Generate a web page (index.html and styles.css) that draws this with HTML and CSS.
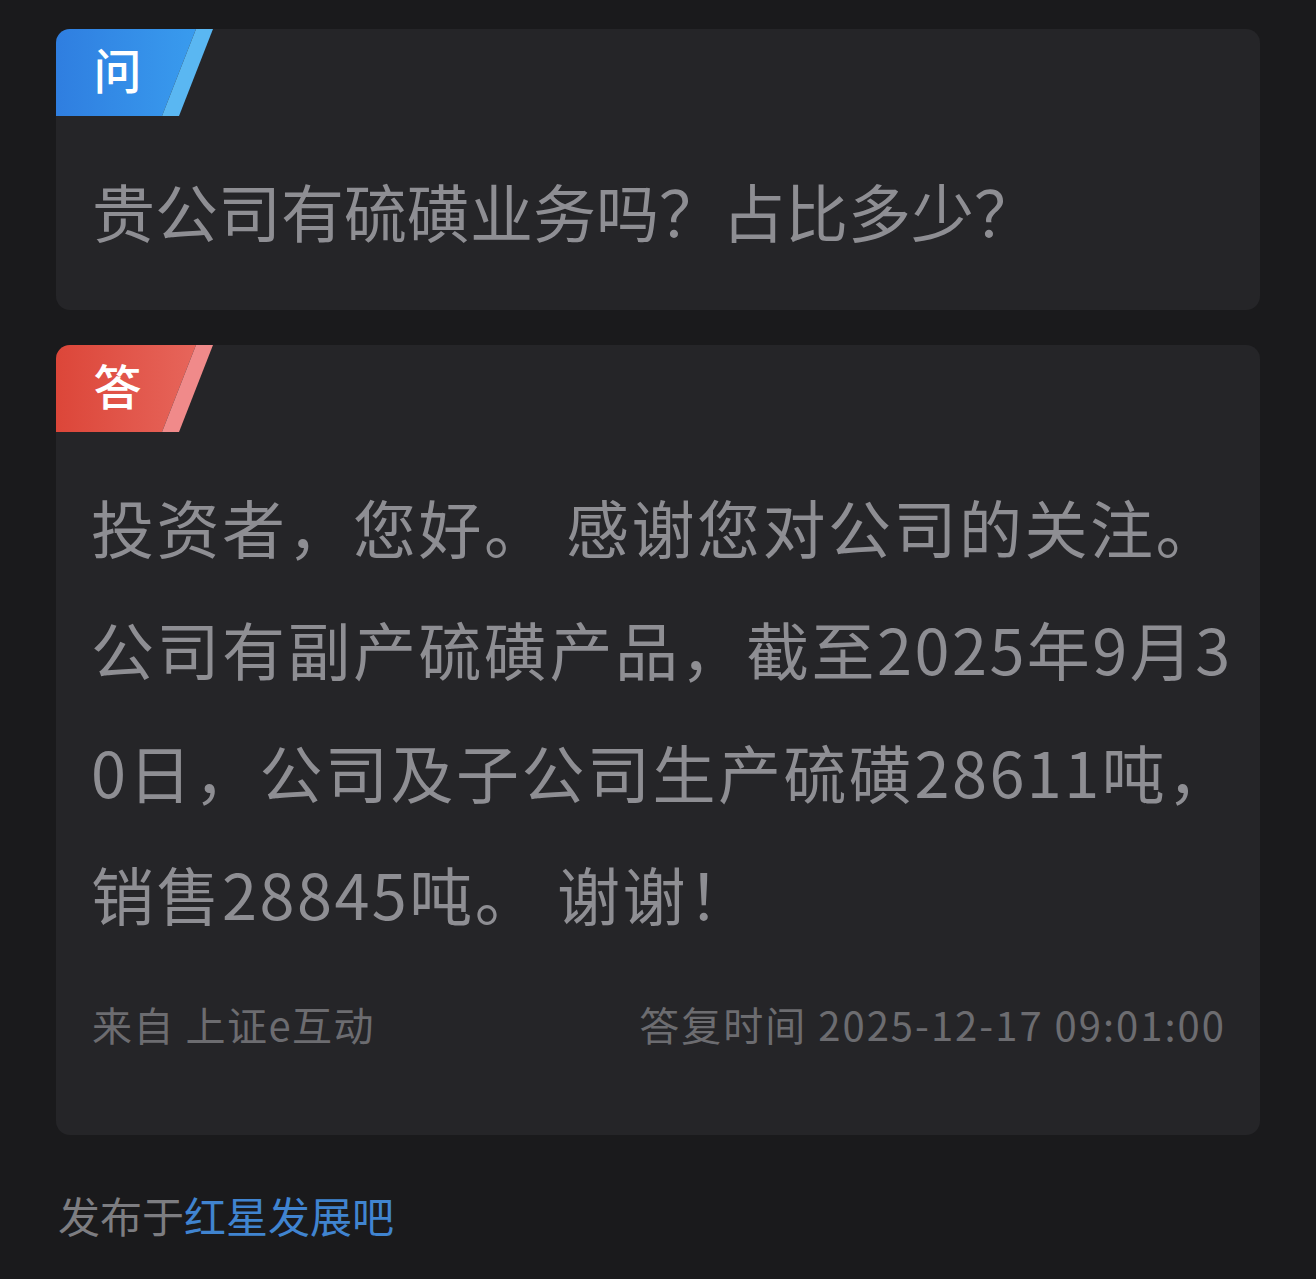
FILE: index.html
```html
<!DOCTYPE html>
<html lang="zh-CN">
<head>
<meta charset="utf-8">
<title>问答</title>
<link rel="stylesheet" href="styles.css">
</head>
<body>
<main class="page">
  <section class="card">
    <div class="badge badge-q"><span class="badge-text">问</span></div>
    <p class="question">贵公司有硫磺业务吗？占比多少？</p>
  </section>
  <section class="card">
    <div class="badge badge-a"><span class="badge-text">答</span></div>
    <p class="answer">投资者，您好。 感谢您对公司的关注。<br>公司有副产硫磺产品，截至2025年9月3<br>0日，公司及子公司生产硫磺28611吨，<br>销售28845吨。 谢谢！</p>
    <div class="meta">
      <span class="source">来自 上证e互动</span>
      <span class="time">答复时间 2025-12-17 09:01:00</span>
    </div>
  </section>
  <p class="posted">发布于<a class="forum" href="#">红星发展吧</a></p>
</main>
</body>
</html>
```

FILE: styles.css
```css
* { box-sizing: border-box; }
html, body {
  margin: 0;
  padding: 0;
  background: #1a1a1c;
}
body {
  font-family: "Noto Sans CJK SC", "Noto Sans", sans-serif;
  color: #8e8e93;
}
.page {
  padding: 29px 56px 0;
  display: flex;
  flex-direction: column;
  gap: 35px;
}
.card {
  background: #252528;
  border-radius: 14px;
  overflow: hidden;
}
.badge {
  position: relative;
  width: 157px;
  height: 87px;
  display: flex;
  align-items: center;
}
.badge::before,
.badge::after {
  content: "";
  position: absolute;
  inset: 0;
}
.badge::before {
  clip-path: polygon(0 0, 140px 0, 106px 100%, 0 100%);
}
.badge::after {
  clip-path: polygon(140px 0, 157px 0, 123px 100%, 106px 100%);
}
.badge-q::before { background: linear-gradient(90deg, #2f7ee0, #3a9ff0); }
.badge-q::after { background: #5ab7f2; }
.badge-a::before { background: linear-gradient(90deg, #dc4639, #e8695f); }
.badge-a::after { background: #f08a8a; }
.badge-text {
  position: relative;
  z-index: 1;
  width: 123px;
  text-align: center;
  color: #ffffff;
  font-size: 48px;
  font-weight: 500;
  line-height: 1;
  margin-top: -10px;
}
.question {
  margin: 0;
  padding: 47px 36px 53px;
  font-size: 63px;
  line-height: 94px;
  color: #8e8e93;
}
.answer {
  margin: 0;
  padding: 33px 20px 0 35px;
  font-size: 63px;
  line-height: 122.3px;
  letter-spacing: 2.5px;
  white-space: nowrap;
  color: #8e8e93;
}
.meta {
  display: flex;
  justify-content: space-between;
  padding: 42px 36px 83px 36px;
  font-size: 40px;
  line-height: 56px;
  color: #6c6c70;
}
.source { letter-spacing: 1.5px; }
.time { letter-spacing: 2px; margin-right: -2px; }
.posted {
  margin: 15px 0 0 2px;
  font-size: 42px;
  line-height: 60px;
  color: #7d7d81;
}
.forum {
  color: #4084d0;
  text-decoration: none;
}
```
